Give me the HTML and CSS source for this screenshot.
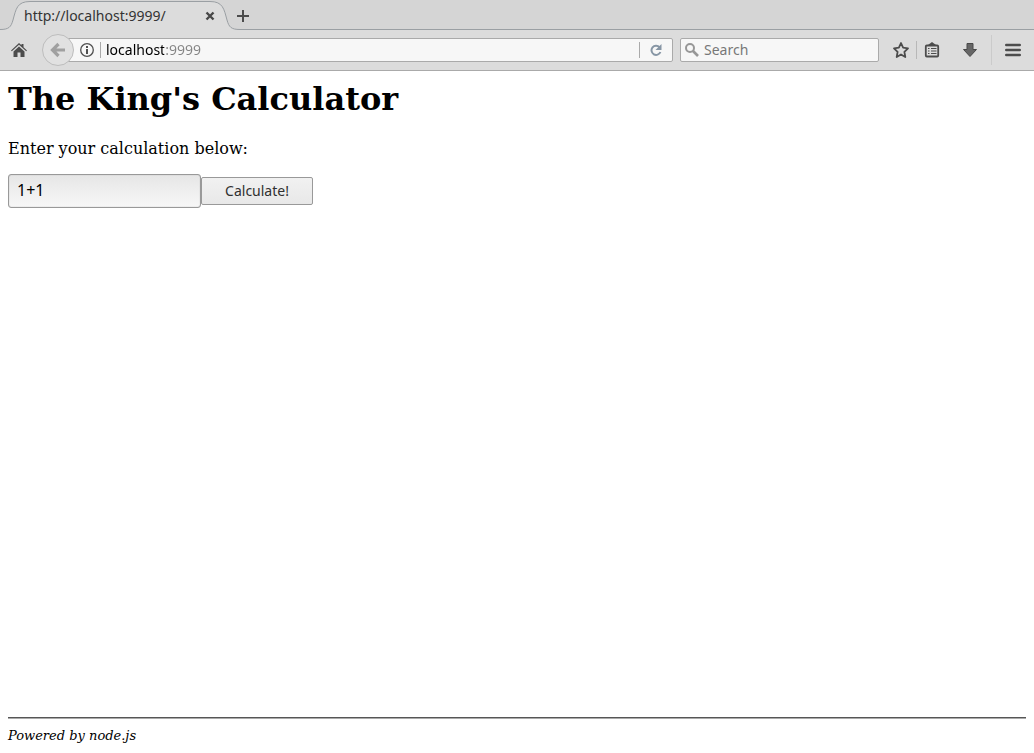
FILE: index.html
```html
<!DOCTYPE html>
<html lang="en">
<head>
<meta charset="utf-8">
<title>The King's Calculator</title>
<link rel="stylesheet" href="styles.css">
</head>
<body>
<header class="browser">
  <div class="tabs">
    <div class="tab">
      <svg class="tab-shape" width="240" height="30" viewBox="0 0 240 30" aria-hidden="true">
        <path d="M0 29.5C9 29.5 11 27 13 20C16 9 17 1.500 30 1.500H210C223 1.500 224 9 227 20C229 27 231 29.500 240 29.500V30H0Z" fill="#dcdcdc"/>
        <path d="M0 29.5C9 29.500 11 27 13 20C16 9 17 1.500 30 1.500H210C223 1.500 224 9 227 20C229 27 231 29.500 240 29.500" fill="none" stroke="#9a9fa3"/>
      </svg>
      <span class="tab-title">http://localhost:9999/</span>
      <button class="icon-button tab-close" aria-label="Close tab"><svg width="10" height="10" viewBox="0 0 10 10"><path d="M1.500 1.500L8.500 8.500M8.500 1.500L1.500 8.500" stroke="#474747" stroke-width="2.400"/></svg></button>
    </div>
    <div class="tab-rest">
      <button class="icon-button" aria-label="New tab"><svg width="12" height="12" viewBox="0 0 12 12"><path d="M6 0V12M0 6H12" stroke="#4c4c4c" stroke-width="2"/></svg></button>
    </div>
  </div>
  <div class="toolbar">
    <button class="icon-button home" aria-label="Home"><svg width="16" height="16" viewBox="0 0 16 16"><path d="M8 1L10.500 3.300V2H12.500V5.200L16 8.500L15.200 9.300L8 2.800L.8 9.300L0 8.500Z" fill="#4c4c4c"/><path d="M8 4.500L13.500 9.500V15H9.500V10.500H6.500V15H2.500V9.500Z" fill="#4c4c4c"/></svg></button>
    <button class="icon-button back" aria-label="Back"><svg width="16" height="16" viewBox="0 0 16 16"><path d="M8.500 2L2.500 8L8.500 14M3 8H15" fill="none" stroke="#a0a0a0" stroke-width="3.200"/></svg></button>
    <div class="address">
      <button class="icon-button info" aria-label="Site information"><svg width="14" height="14" viewBox="0 0 14 14"><circle cx="7" cy="7" r="6.300" fill="none" stroke="#505050" stroke-width="1.300"/><path d="M7 6V11M7 3V5" stroke="#505050" stroke-width="2"/></svg></button>
      <input class="url" type="text" aria-label="Address" value="localhost:9999">
      <button class="icon-button reload" aria-label="Reload"><svg width="12" height="12" viewBox="0 0 12 12"><path d="M9.500 3.200A4.600 4.600 0 1 0 10.400 8" fill="none" stroke="#8796a5" stroke-width="2"/><path d="M11.500 0V6H5.500Z" fill="#8796a5"/></svg></button>
    </div>
    <div class="search">
      <svg width="14" height="14" viewBox="0 0 14 14" aria-hidden="true"><circle cx="5" cy="5" r="4" fill="none" stroke="#979797" stroke-width="2"/><path d="M8 8L13 13" stroke="#979797" stroke-width="2.600"/></svg>
      <input class="search-text" type="text" aria-label="Search" placeholder="Search">
    </div>
    <div class="actions">
      <button class="icon-button star" aria-label="Bookmark this page"><svg width="18" height="18" viewBox="0 0 18 18"><path d="M9 2L11.100 6.700L16 7.300L12.400 10.800L13.300 16L9 13.400L4.700 16L5.600 10.800L2 7.300L6.900 6.700Z" fill="none" stroke="#4c4c4c" stroke-width="1.800" stroke-linejoin="round"/></svg></button>
      <button class="icon-button list" aria-label="Bookmarks"><svg width="16" height="16" viewBox="0 0 16 16"><path d="M4 3L8 0L12 3Z" fill="#4c4c4c"/><rect x="1.800" y="3.500" width="12.400" height="11" rx="1" fill="none" stroke="#4c4c4c" stroke-width="1.800"/><path d="M4 6.500H5.500M7 6.500H12.500M4 9H5.500M7 9H12.500M4 11.500H5.500M7 11.500H12.500" stroke="#4c4c4c" stroke-width="1.200"/></svg></button>
      <button class="icon-button download" aria-label="Downloads"><svg width="16" height="16" viewBox="0 0 16 16"><path d="M5 1.500H11V7.500H14.500L8 14.500L1.500 7.500H5Z" fill="#666" stroke="#484848"/></svg></button>
      <button class="icon-button menu" aria-label="Menu"><svg width="16" height="14" viewBox="0 0 16 14"><path d="M1.300 2H14.700M1.300 7H14.700M1.300 12H14.700" stroke="#4c4c4c" stroke-width="2.600" stroke-linecap="round"/></svg></button>
    </div>
  </div>
</header>
<main class="page">
  <h1 class="title">The King's Calculator</h1>
  <label class="prompt" for="calc">Enter your calculation below:</label>
  <form class="form">
    <input class="calc" id="calc" type="text" value="1+1">
    <button class="submit" type="button">Calculate!</button>
  </form>
  <footer class="footer">Powered by node.js</footer>
</main>
</body>
</html>
```
FILE: styles.css
```css
* { box-sizing: border-box; }

body {
  margin: 0;
  min-height: 100vh;
  display: flex;
  flex-direction: column;
  background: #fff;
  color: #000;
  font-family: "DejaVu Serif", serif;
}

button, input {
  margin: 0;
  font-family: "Noto Sans", sans-serif;
  font-size: 14px;
}

.browser {
  background: #dcdcdc;
  border-bottom: 1px solid #aaa;
  font: 14px "Noto Sans", sans-serif;
}

.icon-button {
  display: flex;
  align-items: center;
  justify-content: center;
  flex: none;
  padding: 0;
  border: 0;
  background: none;
}

.tabs {
  display: flex;
  height: 30px;
  background: #d5d5d5;
}

.tab {
  position: relative;
  display: flex;
  align-items: center;
  justify-content: space-between;
  width: 240px;
  padding: 2px 25px 0 24px;
}

.tab-shape {
  position: absolute;
  left: 0;
  top: 0;
}

.tab-title, .tab-close { position: relative; }

.tab-title {
  padding-bottom: 2px;
  color: #333;
}

.tab-rest {
  display: flex;
  flex: 1;
  align-items: center;
  padding-top: 2px;
  border-bottom: 1px solid #9a9fa3;
}

.tab-rest .icon-button { margin-left: -3px; }

.toolbar {
  display: flex;
  align-items: center;
  height: 40px;
  padding-right: 13px;
}

.home { margin: 0 15px 0 11px; }

.back {
  z-index: 1;
  width: 32px;
  height: 32px;
  border: 1px solid #bdbdbd;
  border-radius: 50%;
  background: #e1e1e1;
}

.address, .search {
  display: flex;
  align-items: center;
  height: 24px;
  border: 1px solid #aaa;
  border-radius: 2px;
  background: #f7f7f7;
}

.address {
  flex: 1;
  margin-left: -8px;
  padding-left: 13px;
}

.info {
  width: 21px;
  height: 16px;
  justify-content: flex-start;
  border-right: 1px solid #aaa;
}

.url {
  flex: 1;
  min-width: 0;
  height: 22px;
  margin-left: 5px;
  padding: 0 0 2px;
  border: 0;
  background: linear-gradient(to right, #000 58px, #858585 58px);
  -webkit-background-clip: text;
  background-clip: text;
  color: transparent;
  caret-color: #000;
}

.reload {
  width: 33px;
  height: 16px;
  border-left: 1px solid #aaa;
}

.search {
  width: 199px;
  margin-left: 7px;
  padding: 0 4px;
}

.search-text {
  flex: 1;
  min-width: 0;
  height: 22px;
  margin-left: 5px;
  padding: 0 0 2px;
  border: 0;
  background: none;
}

.search-text::placeholder { color: #777; }

.actions {
  display: flex;
  align-items: center;
  margin-left: 13px;
}

.list {
  height: 18px;
  width: 24px;
  margin-left: 6px;
  padding-left: 7px;
  border-left: 1px solid #b8b8b8;
}

.download { margin-left: 22px; }

.menu {
  height: 30px;
  width: 30px;
  margin-left: 13px;
  padding-left: 13px;
  border-left: 1px solid #cbcbcb;
}

.page {
  display: flex;
  flex: 1;
  flex-direction: column;
  padding: 9px 8px;
}

.title {
  margin: 0;
  font-size: 32px;
  line-height: 38px;
}

.prompt {
  margin-top: 21px;
  font-size: 16px;
  line-height: 19px;
}

.form {
  display: flex;
  align-items: center;
  margin-top: 16px;
}

.calc {
  width: 193px;
  height: 34px;
  padding: 0 8px 2px;
  border: 1px solid #999;
  border-radius: 3px;
  background: linear-gradient(#e6e6e6, #f7f7f7);
  box-shadow: inset 0 0 1px #999;
  color: #000;
  font-size: 16px;
}

.submit {
  width: 112px;
  height: 28px;
  padding: 0 0 2px;
  border: 1px solid #999;
  border-radius: 2px;
  background: linear-gradient(#f1f1f1, #e8e8e8);
  color: #303030;
}

.footer {
  margin-top: auto;
  padding-top: 9px;
  border-top: 2px groove #aaa;
  font-size: 13px;
  line-height: 16px;
  font-style: italic;
}
```
